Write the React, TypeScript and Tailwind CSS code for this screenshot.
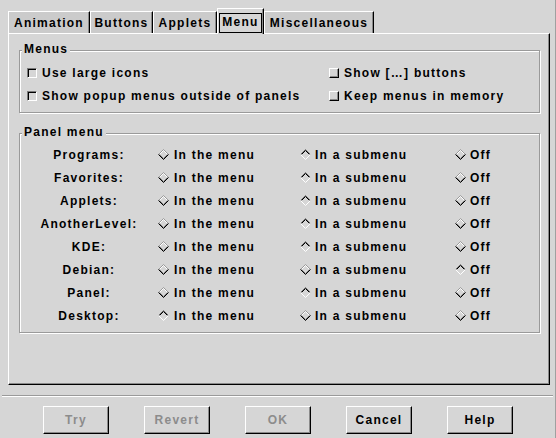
import React from 'react'

const tabs = [
  { label: 'Animation', w: 'w-[82px]' },
  { label: 'Buttons', w: 'w-[63px]' },
  { label: 'Applets', w: 'w-[64px]' },
  { label: 'Menu', w: 'w-[47px]', active: true },
  { label: 'Miscellaneous', w: 'w-[110px]' },
]

const panelRows: [string, number][] = [
  ['Programs:', 1],
  ['Favorites:', 1],
  ['Applets:', 1],
  ['AnotherLevel:', 1],
  ['KDE:', 1],
  ['Debian:', 2],
  ['Panel:', 1],
  ['Desktop:', 0],
]

const choices = ['In the menu', 'In a submenu', 'Off']

function Diamond({ on }: { on: boolean }) {
  return (
    <svg width="11" height="11" viewBox="0 0 11 11" className="shrink-0">
      <polygon points="5.5,1 10,5.5 5.5,10 1,5.5" fill="#d6d6d6" />
      <polyline points="0.5,5.5 5.5,0.5 10.5,5.5" fill="none" stroke={on ? '#6e6e6e' : '#9a9a9a'} />
      <polyline points="0.5,5.5 5.5,10.5 10.5,5.5" fill="none" stroke={on ? '#fff' : '#000'} />
      <polyline points="1.5,5.5 5.5,1.5 9.5,5.5" fill="none" stroke={on ? '#000' : '#fff'} />
      <polyline points="1.5,5.5 5.5,9.5 9.5,5.5" fill="none" stroke={on ? '#d6d6d6' : '#7a7a7a'} />
    </svg>
  )
}

function Check({ label, sunken }: { label: string; sunken?: boolean }) {
  return (
    <div className="flex h-[23px] items-center gap-[5px]">
      {sunken ? (
        <span className="box-border h-[10px] w-[10px] border border-t-[#7a7a7a] border-l-[#7a7a7a] border-b-white border-r-white shadow-[inset_1px_1px_0_#000]" />
      ) : (
        <span className="box-border h-[10px] w-[10px] border border-t-white border-l-white border-b-black border-r-black shadow-[inset_-1px_-1px_0_#8a8a8a]" />
      )}
      <span>{label}</span>
    </div>
  )
}

function Frame({ title, className, children }: { title: string; className: string; children: React.ReactNode }) {
  return (
    <div
      className={`relative box-border w-[521px] border border-[#9a9a9a] shadow-[inset_1px_1px_0_#fff,1px_1px_0_#fff] ${className}`}
    >
      <span className="absolute -top-[9px] left-[2px] bg-[#d6d6d6] px-[2px] leading-[15px]">{title}</span>
      {children}
    </div>
  )
}

function Button({ label, disabled }: { label: string; disabled?: boolean }) {
  return (
    <button
      className={`box-border flex h-[28px] w-[66px] items-center justify-center border border-t-white border-l-white border-b-black border-r-black bg-[#d6d6d6] shadow-[inset_-1px_-1px_0_#8a8a8a] ${
        disabled ? 'text-[#8c8c8c]' : 'text-black'
      }`}
    >
      {label}
    </button>
  )
}

export default function App() {
  return (
    <div className="box-border h-[438px] w-[556px] overflow-hidden border-r border-[#a0a0a0] bg-[#d6d6d6] pt-[8px] font-['Liberation_Sans',Arial,sans-serif] text-[12px] font-bold tracking-[1.25px] text-black">
      {/* notebook tabs */}
      <div className="flex h-[25px] items-end pl-[8px]">
        {tabs.map((t) =>
          t.active ? (
            <div
              key={t.label}
              className={`relative z-10 -mb-[1px] box-border flex h-[26px] ${t.w} items-start justify-center border-t border-l border-r border-t-white border-l-white border-r-black bg-[#d6d6d6] pt-[4px] shadow-[inset_-1px_0_0_#8a8a8a]`}
            >
              <span className="box-border border border-black px-[2px] pb-[3px] pt-[1px] leading-[14px]">
                {t.label}
              </span>
            </div>
          ) : (
            <div
              key={t.label}
              className={`box-border flex h-[22px] ${t.w} items-center justify-center border-t border-l border-r border-t-white border-l-white border-r-black bg-[#cbcbcb] shadow-[inset_-1px_0_0_#8a8a8a]`}
            >
              {t.label}
            </div>
          )
        )}
      </div>

      {/* notebook page */}
      <div className="ml-[8px] box-border h-[352px] w-[542px] border border-t-white border-l-white border-b-black border-r-black shadow-[inset_-1px_-1px_0_#8a8a8a]">
        <Frame title="Menus" className="ml-[10px] mt-[16px] pb-[5px] pt-[10px]">
          <div className="grid grid-cols-[302px_1fr] pl-[7px]">
            <Check label="Use large icons" sunken />
            <Check label="Show […] buttons" />
            <Check label="Show popup menus outside of panels" sunken />
            <Check label="Keep menus in memory" />
          </div>
        </Frame>

        <Frame title="Panel menu" className="ml-[10px] mt-[20px] pb-[5px] pt-[9px]">
          <div className="grid grid-cols-[138px_142px_155px_1fr]">
            {panelRows.map(([name, sel]) => (
              <React.Fragment key={name}>
                <div className="flex h-[23px] items-center justify-center">{name}</div>
                {choices.map((c, i) => (
                  <div key={c} className={`flex h-[23px] items-center ${i === 0 ? 'gap-[5px]' : 'gap-[4px]'}`}>
                    <Diamond on={sel === i} />
                    <span>{c}</span>
                  </div>
                ))}
              </React.Fragment>
            ))}
          </div>
        </Frame>
      </div>

      {/* separator */}
      <div className="mx-[2px] mt-[10px] h-[2px] border-t border-b border-t-[#9a9a9a] border-b-white" />

      {/* action buttons */}
      <div className="mt-[9px] flex gap-[35px] pl-[43px]">
        <Button label="Try" disabled />
        <Button label="Revert" disabled />
        <Button label="OK" disabled />
        <Button label="Cancel" />
        <Button label="Help" />
      </div>
    </div>
  )
}
